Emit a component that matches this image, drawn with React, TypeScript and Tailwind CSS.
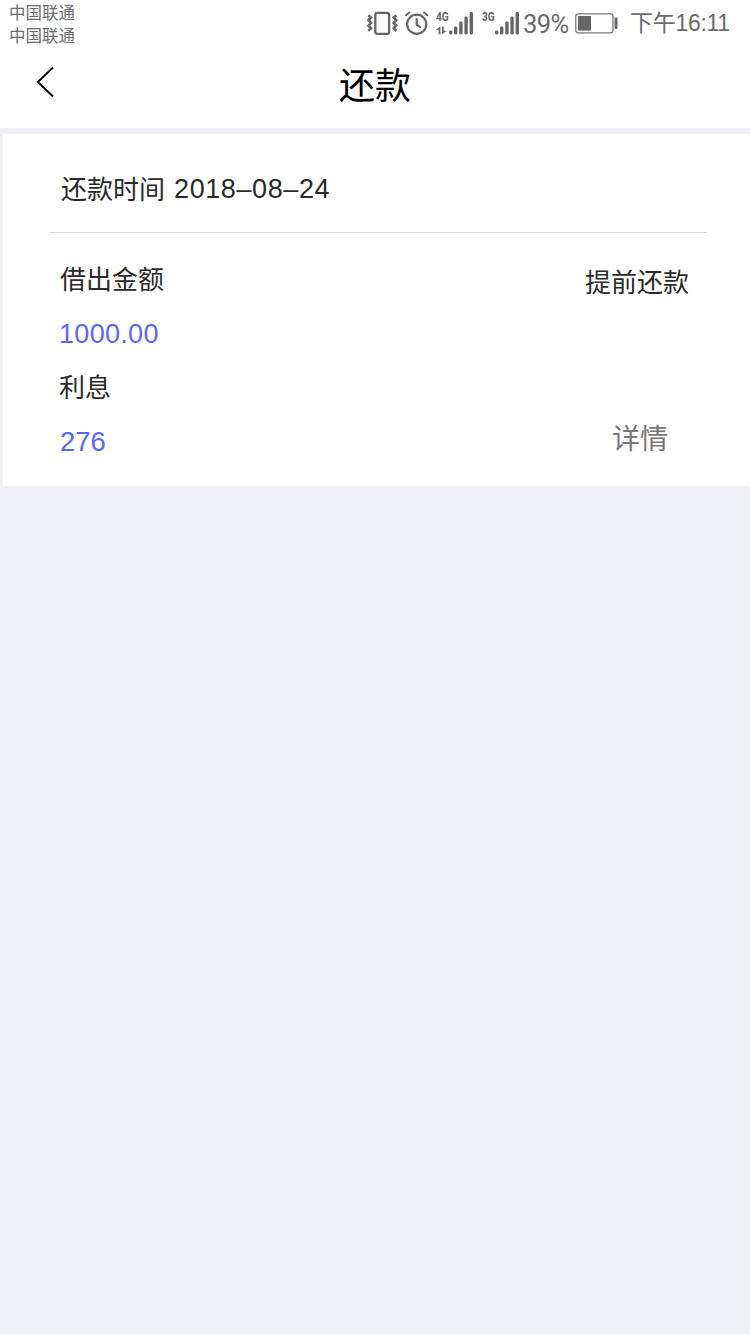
const cjk = "font-['Liberation_Sans','Noto_Sans_CJK_SC',sans-serif]";

const VibrateIcon = () => (
    <svg className="w-8 h-6" viewBox="366.6 11 32 24" fill="none" stroke="#666">
        <rect x="374.9" y="12.9" width="13.8" height="21" rx="2" strokeWidth="2.3" />
        <path d="M367.9 15.2l2.8 2.3-2.7 2.7 2.7 2.7-2.7 2.7 2.7 2.7-2.8 2.5" strokeWidth="2.5" />
        <path d="M396 15.2l-2.8 2.3 2.7 2.7-2.7 2.7 2.7 2.7-2.7 2.7 2.8 2.5" strokeWidth="2.5" />
    </svg>
);

const AlarmIcon = () => (
    <svg className="w-6 h-6" viewBox="404 11 24 24" fill="none" stroke="#666" strokeLinecap="round">
        <circle cx="415.7" cy="24.2" r="9.6" strokeWidth="2.2" />
        <path d="M405 15.2l3.3-2.7M426.4 15.2l-3.3-2.7" strokeWidth="1.9" />
        <path d="M415.7 19v5.4l3.4 2.6" strokeWidth="2.2" />
    </svg>
);

// Bars grow from left to right, all standing on the same baseline
const bars = [
    { x: 14, h: 4 },
    { x: 19, h: 8 },
    { x: 24.2, h: 13 },
    { x: 29.4, h: 18 },
    { x: 34.6, h: 22.5 },
];

const SignalIcon = ({ label, traffic }: { label: string; traffic?: boolean }) => (
    <div className="relative h-6 w-10">
        <span className="absolute left-px -top-px origin-left scale-x-75 font-['Roboto'] text-[13.5px] font-bold leading-[12px] text-[#666]">
            {label}
        </span>
        <svg className="h-6 w-10" viewBox="0 0 40 24" fill="#666">
            {bars.map(({ x, h }) => (
                <rect key={x} x={x} y={23.5 - h} width="3.4" height={h} rx="1.4" />
            ))}
            {traffic && (
                <>
                    <path d="M5.4 15.4v7.8H3.6v-4.4H.8z" />
                    <path d="M7 15.4h1.8v4.4h3L7 23.2z" />
                </>
            )}
        </svg>
    </div>
);

const BatteryIcon = () => (
    <svg className="w-11 h-6" viewBox="575 11 44 24" fill="#666">
        <rect x="575.8" y="13.8" width="37.2" height="19" rx="2.5" fill="none" stroke="#777" strokeWidth="1.3" />
        <rect x="578" y="16" width="13" height="14.6" />
        <rect x="614.6" y="17.5" width="2.9" height="11.5" rx="1" />
    </svg>
);

const StatusBar = () => (
    <div className="flex h-12 justify-between text-[#6b6b6b]">
        <div className="pl-[9px] pt-0.5 text-[16.5px] leading-[23px]">
            <p>中国联通</p>
            <p>中国联通</p>
        </div>
        <div className="flex h-[46px] items-center pr-5">
            <VibrateIcon />
            <div className="ml-1.5">
                <AlarmIcon />
            </div>
            <div className="ml-[6px]">
                <SignalIcon label="4G" traffic />
            </div>
            <div className="ml-[6px]">
                <SignalIcon label="3G" />
            </div>
            <span className="ml-0.5 w-[46px] whitespace-nowrap pt-[3px] font-['Roboto'] text-[25.5px] leading-none tracking-[-0.6px]">
                39%
            </span>
            <div className="ml-1.5">
                <BatteryIcon />
            </div>
            <span className="ml-[11px] w-[100px] whitespace-nowrap text-[23px] leading-[43px] tracking-[-0.3px]">
                下午16:11
            </span>
        </div>
    </div>
);

const Header = () => (
    <header className="grid h-20 grid-cols-[1fr_auto_1fr] text-black">
        <button className="ml-9 mt-[18px] h-8 w-5" aria-label="返回">
            <svg className="h-8 w-5" viewBox="0 0 20 32" fill="none" stroke="currentColor" strokeWidth="1.9">
                <path d="M17 1.5L1.8 16 17 30.5" />
            </svg>
        </button>
        <h1 className="text-[36px] leading-[78px]">还款</h1>
    </header>
);

export default function App() {
    return (
        <div className={`min-h-[1334px] w-[750px] bg-[#f0f1f6] ${cjk}`}>
            <div className="h-32 bg-white">
                <StatusBar />
                <Header />
            </div>
            <main className="ml-[3px] mt-1.5 h-[352px] bg-white pl-[46px] pr-[43px] text-[26px] text-[#2a2a2a]">
                <div className="flex h-[99px] items-center border-b border-[#dcdcdc] pl-3 pt-3.5">
                    <span>还款时间</span>
                    <span className="ml-[9px] -mt-0.5 text-[27px] tracking-[0.6px]">2018–08–24</span>
                </div>
                <div className="flex justify-between pl-2.5 pr-[18px]">
                    <div className="leading-[54px]">
                        <p className="pl-px pt-5">借出金额</p>
                        <p className="text-[27px] tracking-[0.3px] text-[#5a67fa]">1000.00</p>
                        <p>利息</p>
                        <p className="pl-px text-[27.5px] text-[#5a67fa]">276</p>
                    </div>
                    <div className="flex flex-col items-center leading-[54px]">
                        <button className="mt-[23px]">提前还款</button>
                        <button className="ml-1.5 mt-[103px] text-[28px] text-[#777]">详情</button>
                    </div>
                </div>
            </main>
        </div>
    );
}
